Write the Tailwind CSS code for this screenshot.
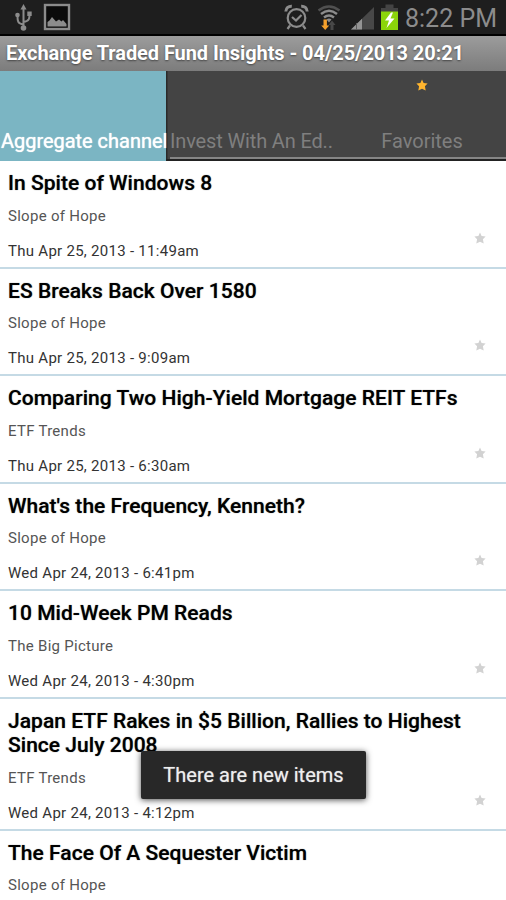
<!DOCTYPE html>
<html lang="en">
<head>
    <meta charset="UTF-8">
    <meta name="viewport" content="width=device-width, initial-scale=1.0">
    <title>Exchange Traded Fund Insights</title>
    <script src="https://cdn.jsdelivr.net/npm/@tailwindcss/browser@4"></script>
</head>
<body class="relative h-[900px] overflow-hidden bg-white font-[Roboto,sans-serif] text-black">
    <svg class="hidden">
        <symbol id="star" viewBox="0 0 12 12">
            <path d="M6 .4 7.6 4 11.6 4.4 8.9 7.2 9.7 11.4 6 9.7 2.3 11.4 3.1 7.2 .4 4.4 4.4 4Z"/>
        </symbol>
    </svg>

    <!-- status bar -->
    <div class="flex h-9 items-center border-b-2 border-black bg-[#1e1e1e] text-[#8c8c8c]">
        <svg class="ml-3.5 h-7 w-[19px]" viewBox="0 0 19 28" fill="none" stroke="currentColor" stroke-width="2">
            <path d="M9.5 5V25M9.5 21.5C3.5 20.5 3.5 18 3.5 13M9.5 19C15.5 18 15.5 15 15.5 12"/>
            <path d="M9.5 1 12.5 6.5H6.5Z" fill="currentColor" stroke="none"/>
            <circle cx="9.5" cy="25" r="2.8" fill="currentColor" stroke="none"/>
            <circle cx="3.5" cy="12" r="2.3" fill="currentColor" stroke="none"/>
            <path d="M13.3 8.5h4.4v4.4h-4.4z" fill="currentColor" stroke="none"/>
        </svg>
        <svg class="ml-2.5 h-7 w-7" viewBox="0 0 28 28">
            <rect x="2" y="2" width="24" height="24" fill="#0b0b0b" stroke="currentColor" stroke-width="2.4"/>
            <path d="M4.5 23.5V19L6.5 17.5 9 14 13 18.5 16 16.5 18.5 18.5 20 17 23.5 21V23.5Z" fill="currentColor"/>
        </svg>
        <svg class="ml-auto h-7 w-[25px]" viewBox="0 0 25 28" fill="none" stroke="currentColor" stroke-width="2.2">
            <circle cx="12.5" cy="15" r="8.8"/>
            <path d="M8 14 12 17.5 17.5 12M6 22.5 3.5 26M19 22.5 21.5 26"/>
            <path d="M1.8 8.5C2 5 4.5 3 7.8 3.2M23.2 8.5C23 5 20.5 3 17.2 3.2" stroke-width="3"/>
        </svg>
        <svg class="ml-2 h-7 w-6" viewBox="0 0 24 28" fill="none" stroke="#8c8c8c" stroke-width="2.4">
            <path d="M1.5 7.5Q12 -.5 22.5 7.5" stroke="#505050"/>
            <path d="M4 11Q12 4.5 20 11M7 14.5Q12 10.5 17 14.5"/>
            <path d="M9.5 16.5Q12 14.5 14.5 16.5L12 19.5Z" fill="#8c8c8c" stroke="none"/>
            <path d="M6.5 16.5h3.4v6h2.3L8.2 27 4.2 22.5h2.3z" fill="#f5a02c" stroke="none"/>
            <path d="M13.5 27V22h-2L15 17.5 18.5 22h-2V27z" fill="#484848" stroke="none"/>
        </svg>
        <svg class="ml-2.5 h-7 w-6" viewBox="0 0 24 28">
            <path d="M0 26.5 23 4V26.5Z" fill="#484848"/>
            <path d="M0 26.5 11 15.7V26.5Z" fill="#949494"/>
            <path d="M5.5 20V26.5" stroke="#5c5c5c"/>
        </svg>
        <svg class="ml-1.5 h-7 w-[17px]" viewBox="0 0 17 28">
            <path d="M4.5 1.5h8V5H17V9H0V5h4.5z" fill="#444"/>
            <path d="M0 8.5h17V27H0z" fill="#8bd40a"/>
            <path d="M10 9.5 4 17.5H8L5.5 25 13.5 15.5H9.5L12 9.5Z" fill="#fff"/>
        </svg>
        <span class="relative top-0.5 ml-[7px] mr-[9px] w-[92px] text-[25px] leading-9 whitespace-nowrap">8:22 PM</span>
    </div>

    <!-- title bar -->
    <h1 class="h-[35px] bg-linear-to-b from-[#9c9c9c] to-[#7c7c7c] pl-1.5 text-[20px] leading-[35px] font-bold tracking-[-0.08px] whitespace-nowrap text-white [text-shadow:0_1px_2px_#444]">Exchange Traded Fund Insights - 04/25/2013 20:21</h1>

    <!-- tabs -->
    <div class="flex h-[90px] bg-[#444] text-[20px] leading-6 whitespace-nowrap text-[#7f7f7f]">
        <div class="relative z-10 flex w-[166px] items-end bg-[#7bb5c3] pb-2 pl-px tracking-[-0.03px] text-white [text-shadow:0_0_1px_#fff]">Aggregate channel</div>
        <div class="flex w-[172px] items-end border-b-2 border-[#222] bg-linear-to-r from-[#2a2a2a] from-[1px] to-[#444] to-[2px] pl-1 tracking-[-0.15px]">
            <span class="w-full border-b-2 border-[#858585] pb-1">Invest With An Ed..</span>
        </div>
        <div class="flex flex-1 flex-col items-center justify-between border-b-2 border-[#222] pt-2">
            <svg class="h-3 w-3 fill-[#ffb52e]"><use href="#star"/></svg>
            <span class="w-full border-b-2 border-[#858585] pb-1 text-center">Favorites</span>
        </div>
    </div>

    <main id="items"></main>

    <!-- toast -->
    <div class="absolute top-[751px] left-[141px] flex h-12 w-[225px] items-center justify-center rounded-xs bg-[#282828] text-[20px] whitespace-nowrap text-[#eee] shadow-[0_1px_6px_rgba(0,0,0,0.7)] [text-shadow:0_0_1px_#aaa]">There are new items</div>

    <script>
        const items = [
            ['In Spite of Windows 8', 'Slope of Hope', 'Thu Apr 25, 2013 - 11:49am'],
            ['ES Breaks Back Over 1580', 'Slope of Hope', 'Thu Apr 25, 2013 - 9:09am'],
            ['Comparing Two High-Yield Mortgage REIT ETFs', 'ETF Trends', 'Thu Apr 25, 2013 - 6:30am'],
            ["What's the Frequency, Kenneth?", 'Slope of Hope', 'Wed Apr 24, 2013 - 6:41pm'],
            ['10 Mid-Week PM Reads', 'The Big Picture', 'Wed Apr 24, 2013 - 4:30pm'],
            ['Japan ETF Rakes in $5 Billion, Rallies to Highest<br>Since July 2008', 'ETF Trends', 'Wed Apr 24, 2013 - 4:12pm'],
            ['The Face Of A Sequester Victim', 'Slope of Hope', ''],
        ];

        document.getElementById('items').innerHTML = items.map(([title, source, date]) => `
            <article class="border-b-2 border-[#c5dae5] pt-[10px] pl-2">
                <h2 class="text-[21px] leading-[24.5px] font-medium tracking-[0.03px] whitespace-nowrap [text-shadow:0_0_1px_#666]">${title}</h2>
                <p class="mt-[9px] text-[15px] leading-[22px] tracking-[0.28px] text-[#555]">${source}</p>
                <div class="flex h-10 items-start justify-between pr-5">
                    <p class="pt-[13px] text-[15px] leading-[22px] tracking-[0.28px] text-[#333]">${date}</p>
                    <svg class="mt-[5px] h-3 w-3 fill-[#d2d2d2]"><use href="#star"/></svg>
                </div>
            </article>`).join('');
    </script>
</body>
</html>
